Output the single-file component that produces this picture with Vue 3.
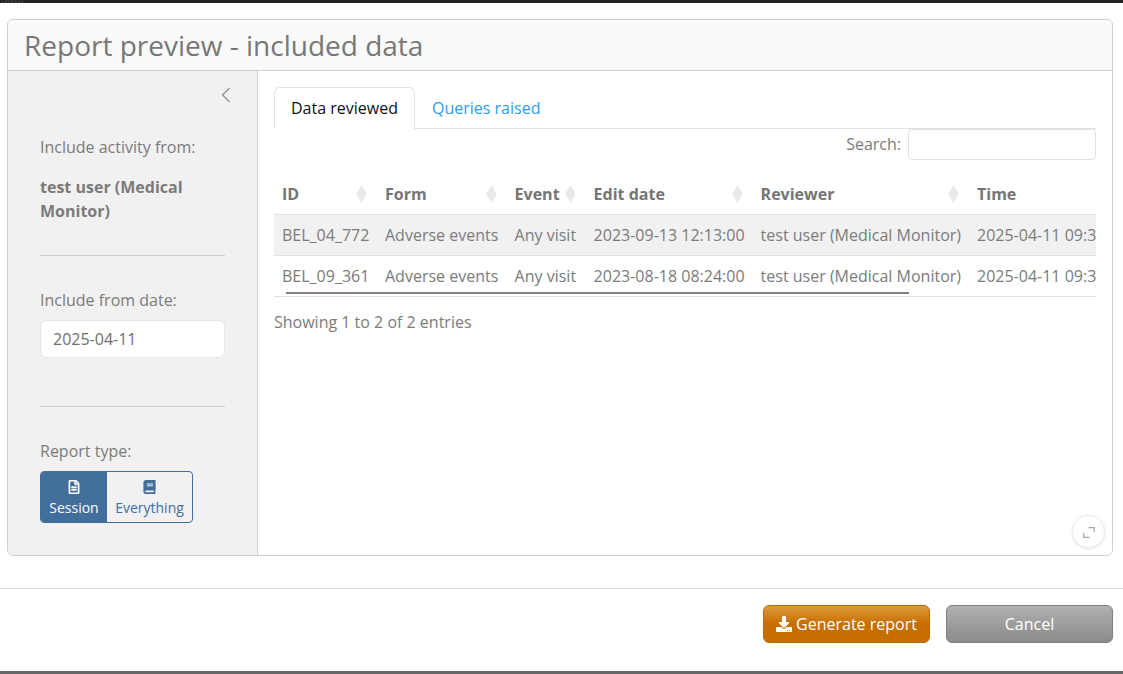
<script setup>
const columns = [
  { label: 'ID', width: 103, sort: true },
  { label: 'Form', width: 129.6, sort: true },
  { label: 'Event', width: 79, sort: true },
  { label: 'Edit date', width: 167, sort: true },
  { label: 'Reviewer', width: 216.4, sort: true },
  { label: 'Time', width: 190, sort: false },
]
const rows = [
  ['BEL_04_772', 'Adverse events', 'Any visit', '2023-09-13 12:13:00', 'test user (Medical Monitor)', '2025-04-11 09:31:22'],
  ['BEL_09_361', 'Adverse events', 'Any visit', '2023-08-18 08:24:00', 'test user (Medical Monitor)', '2025-04-11 09:31:22'],
]
</script>

<template>
  <div class="page">
    <div class="top-strip"><span>data</span></div>
    <div class="body">
      <section class="panel">
        <header class="panel-head">
          <h1>Report preview - included data</h1>
        </header>
        <div class="panel-main">
          <aside class="side">
            <div class="collapse">
              <svg width="10" height="16" viewBox="0 0 10 16"><path d="M8.5 1 1.5 8l7 7" fill="none" stroke="#8a8a8a" stroke-width="1.1" /></svg>
            </div>
            <p class="label first">Include activity from:</p>
            <p class="user">test user (Medical Monitor)</p>
            <hr />
            <p class="label">Include from date:</p>
            <input class="date" value="2025-04-11" />
            <hr class="second" />
            <p class="label">Report type:</p>
            <div class="toggle">
              <div class="opt on">
                <svg width="12" height="14" viewBox="0 0 384 512"><path fill="currentColor" stroke="currentColor" stroke-width="14" d="M369.9 97.9 286 14C277 5 264.800 0 252.100 0H48C21.500 0 0 21.500 0 48v416c0 26.500 21.500 48 48 48h288c26.500 0 48-21.500 48-48V131.900c0-12.700-5.100-25-14.100-34zM332.100 128H256V51.900l76.100 76.100zM48 464V48h160v104c0 13.300 10.700 24 24 24h104v288H48zm240-212v28c0 6.600-5.400 12-12 12H108c-6.600 0-12-5.400-12-12v-28c0-6.600 5.400-12 12-12h168c6.600 0 12 5.400 12 12zm0 92v28c0 6.600-5.400 12-12 12H108c-6.600 0-12-5.400-12-12v-28c0-6.600 5.400-12 12-12h168c6.600 0 12 5.400 12 12z" /></svg>
                <span>Session</span>
              </div>
              <div class="opt">
                <svg width="13" height="14" viewBox="0 0 448 512"><path fill="currentColor" d="M448 360V24c0-13.300-10.700-24-24-24H96C43 0 0 43 0 96v320c0 53 43 96 96 96h328c13.300 0 24-10.700 24-24v-16c0-7.500-3.500-14.300-8.900-18.700-4.200-15.400-4.200-59.300 0-74.700 5.400-4.300 8.900-11.100 8.900-18.600zM128 134c0-3.300 2.700-6 6-6h212c3.300 0 6 2.700 6 6v20c0 3.300-2.700 6-6 6H134c-3.300 0-6-2.700-6-6v-20zm0 64c0-3.300 2.700-6 6-6h212c3.300 0 6 2.700 6 6v20c0 3.300-2.700 6-6 6H134c-3.300 0-6-2.700-6-6v-20zm253.400 250H96c-17.700 0-32-14.300-32-32 0-17.600 14.400-32 32-32h285.400c-1.900 17.100-1.900 46.900 0 64z" /></svg>
                <span>Everything</span>
              </div>
            </div>
          </aside>
          <main class="content">
            <nav class="tabs">
              <div class="tab active">Data reviewed</div>
              <div class="tab">Queries raised</div>
            </nav>
            <div class="search">
              <label>Search:</label>
              <input />
            </div>
            <div class="table-wrap">
              <table>
                <colgroup>
                  <col v-for="c in columns" :key="c.label" :style="{ width: c.width + 'px' }" />
                </colgroup>
                <thead>
                  <tr>
                    <th v-for="c in columns" :key="c.label">
                      {{ c.label }}
                      <svg v-if="c.sort" class="sort" width="11" height="18" viewBox="0 0 11 18"><path d="M5.500 0 10.800 9 5.500 18 0.200 9z" fill="#e8e9e9" /></svg>
                    </th>
                  </tr>
                </thead>
                <tbody>
                  <tr v-for="(r, i) in rows" :key="i">
                    <td v-for="(cell, j) in r" :key="j">{{ cell }}</td>
                  </tr>
                </tbody>
              </table>
              <div class="scrollbar"><i class="tint"></i></div>
            </div>
            <p class="info">Showing 1 to 2 of 2 entries</p>
            <button class="expand" aria-label="Expand">
              <svg width="12" height="11" viewBox="0 0 12 11"><path d="M5.500 0.700h5.700v4.200M6.500 10.300H0.800V6.100" fill="none" stroke="#a3a3a3" stroke-width="1.200" /></svg>
            </button>
          </main>
        </div>
      </section>
    </div>
    <footer class="foot">
      <button class="btn primary">
        <svg width="16" height="16" viewBox="0 0 512 512"><path fill="currentColor" d="M216 0h80c13.300 0 24 10.700 24 24v168h87.700c17.800 0 26.700 21.500 14.100 34.100L269.700 378.300c-7.500 7.500-19.800 7.500-27.300 0L90.100 226.100c-12.600-12.600-3.700-34.100 14.100-34.100H192V24c0-13.300 10.700-24 24-24zm296 376v112c0 13.300-10.700 24-24 24H24c-13.300 0-24-10.700-24-24V376c0-13.300 10.700-24 24-24h146.700l49 49c20.100 20.100 52.500 20.100 72.600 0l49-49H488c13.300 0 24 10.700 24 24zm-124 88c0-11-9-20-20-20s-20 9-20 20 9 20 20 20 20-9 20-20zm64 0c0-11-9-20-20-20s-20 9-20 20 9 20 20 20 20-9 20-20z" /></svg>
        <span>Generate report</span>
      </button>
      <button class="btn neutral">Cancel</button>
    </footer>
    <div class="bottom-strip"></div>
  </div>
</template>

<style>
html, body { margin: 0; background: #fff; }
</style>

<style scoped>
.page {
  width: 1123px;
  height: 674px;
  display: flex;
  flex-direction: column;
  overflow: hidden;
  background: #fff;
  font-family: "Open Sans", "Noto Sans", sans-serif;
  font-size: 16px;
  line-height: 24px;
  color: #6f6f6f;
}
.top-strip {
  height: 3px;
  background: #222327;
  flex: none;
  overflow: hidden;
  padding-left: 1px;
  font-size: 11px;
  line-height: 3px;
  color: #4a4a4e;
}
.top-strip span { display: block; transform: translateY(-3px); }
.body { padding: 16px 10px 0 7px; flex: none; }
.panel {
  height: 537px;
  box-sizing: border-box;
  border: 1px solid #cfcfcf;
  border-radius: 6px;
  display: flex;
  flex-direction: column;
  overflow: hidden;
}
.panel-head {
  height: 51px;
  flex: none;
  box-sizing: border-box;
  background: #fafafa;
  border-bottom: 1px solid #cfcfcf;
  padding-left: 16px;
}
h1 {
  margin: 0;
  font-size: 28px;
  line-height: 51px;
  font-weight: 400;
  color: #777;
}
.panel-main { flex: 1; display: flex; min-height: 0; }
.side {
  width: 250px;
  flex: none;
  box-sizing: border-box;
  background: #f1f1f1;
  border-right: 1px solid #cfcfcf;
  padding: 0 32px;
  display: flex;
  flex-direction: column;
  position: relative;
}
.collapse { position: absolute; top: 16px; right: 26px; height: 16px; line-height: 0; }
.label { margin: 0; color: #7b7b7b; }
.first { margin-top: 64px; }
.user { margin: 16px 0 0; font-weight: 700; color: #7b7b7b; }
hr {
  width: 100%;
  margin: 32px 0 32px;
  border: 0;
  border-top: 1px solid #cfcfcf;
}
.date {
  margin-top: 8px;
  height: 38px;
  box-sizing: border-box;
  width: 185px;
  border: 1px solid #e3e6ea;
  border-radius: 6px;
  background: #fff;
  padding: 0 12px;
  font: inherit;
  color: #6f6f6f;
  outline: none;
}
hr.second { margin-top: 48px; }
.toggle {
  margin-top: 8px;
  width: 153px;
  height: 52px;
  box-sizing: border-box;
  border: 1px solid #426e9c;
  border-radius: 4px;
  display: flex;
  overflow: hidden;
}
.opt {
  flex: 1;
  display: flex;
  flex-direction: column;
  align-items: center;
  justify-content: flex-start;
  color: #426e9c;
  font-size: 14px;
  line-height: 20px;
  padding-top: 8px;
  box-sizing: border-box;
}
.opt svg { margin-bottom: 4px; flex: none; }
.opt.on { flex: none; width: 66px; background: #426e9c; color: #fff; }
.content {
  flex: 1;
  min-width: 0;
  padding: 16px 16px 0;
  position: relative;
}
.tabs { display: flex; height: 41px; border-bottom: 1px solid #dee2e6; }
.tab {
  padding: 8px 16px;
  height: 42px;
  box-sizing: border-box;
  color: #2f9bf0;
  border: 1px solid transparent;
  border-radius: 6px 6px 0 0;
}
.tab.active {
  color: #111;
  background: #fff;
  border-color: #dee2e6 #dee2e6 #fff;
}
.search {
  display: flex;
  justify-content: flex-end;
  align-items: center;
  gap: 7px;
  height: 31px;
}
.search label { color: #7b7b7b; margin-bottom: 2px; }
.search input {
  width: 188px;
  height: 31px;
  box-sizing: border-box;
  border: 1px solid #dee2e6;
  border-radius: 4px;
  background: #fff;
  outline: none;
}
.table-wrap {
  margin-top: 14px;
  position: relative;
  overflow: hidden;
}
table {
  border-collapse: collapse;
  table-layout: fixed;
  width: 885px;
}
th, td {
  padding: 8px;
  text-align: left;
  white-space: nowrap;
  overflow: hidden;
  height: 41px;
  box-sizing: border-box;
  border-bottom: 1px solid #dfe1e5;
}
th { font-weight: 700; color: #757575; position: relative; height: 40px; }
td { color: #7b7b7b; }
tbody tr:first-child td { background: #f1f1f1; }
.sort { position: absolute; right: 10px; top: 11px; }
.scrollbar {
  position: absolute;
  left: 12px;
  top: 118px;
  width: 623px;
  height: 2px;
  background: #808080;
}
.tint {
  position: absolute;
  left: 11px;
  top: 0;
  width: 55px;
  height: 1px;
  background: #a27c7e;
}
.info { margin: 13px 0 0; color: #7b7b7b; }
.expand {
  position: absolute;
  right: 7px;
  bottom: 7px;
  width: 33px;
  height: 33px;
  border-radius: 50%;
  border: 1px solid #eee;
  background: #fff;
  box-shadow: 0 1px 3px rgba(0, 0, 0, 0.1);
  padding: 2px 0 0;
  display: flex;
  align-items: center;
  justify-content: center;
}
.foot {
  margin-top: 32px;
  flex: none;
  height: 83px;
  box-sizing: border-box;
  border-top: 1px solid #dedede;
  display: flex;
  justify-content: flex-end;
  align-items: flex-start;
  gap: 16px;
  padding: 16px 10px 0 0;
}
.btn {
  width: 167px;
  height: 38px;
  box-sizing: border-box;
  border-radius: 6px;
  color: #fff;
  font: inherit;
  display: flex;
  align-items: center;
  justify-content: center;
  gap: 4px;
  padding: 0;
}
.primary {
  background: linear-gradient(#e09a3c, #c66e00 50%);
  border: 1px solid #b66a0a;
}
.neutral {
  background: linear-gradient(#b0b0b0, #8b8b8b);
  border: 1px solid #808080;
}
.bottom-strip { flex: 1; background: #666; }
</style>
